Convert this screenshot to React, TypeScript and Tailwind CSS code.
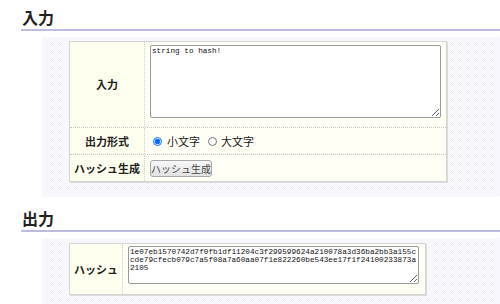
const HASH =
  '1e07eb1570742d7f0fb1df11204c3f299599624a210078a3d36ba2bb3a155ccde79cfecb079c7a5f08a7a60aa07f1e822260be543ee17f1f24100233873a2105';

const jp = "font-['Noto_Sans_CJK_JP','Noto_Sans',sans-serif]";
const mono = "font-['Liberation_Mono',monospace]";
const pattern =
  'bg-[image:repeating-conic-gradient(#f2f2fa_0_25%,#fdfdff_0_50%)] bg-[length:2px_2px]';

function Heading({ title }: { title: string }) {
  return (
    <h2
      className={`ml-[21px] pl-[1px] pt-[5px] text-[16px] leading-[24px] font-bold text-[#222] border-b-2 border-[#bcbcdf] ${jp}`}
    >
      {title}
    </h2>
  );
}

function Label({ children, className = '' }: { children: React.ReactNode; className?: string }) {
  return (
    <div
      className={`flex items-center justify-center bg-[#fffff0] border-r border-dotted border-[#cfcfcf] text-[11px] font-bold text-[#222] ${className}`}
    >
      {children}
    </div>
  );
}

export default function App() {
  return (
    <div className={`w-[500px] h-[304px] overflow-hidden bg-white ${jp}`}>
      <Heading title="入力" />
      <div className={`ml-[42px] mt-[6px] pt-[4px] pb-[15px] pl-[27px] ${pattern}`}>
        <div className="w-[378px] border border-[#d4d4d4] shadow-[1px_1px_0_#dcdcdc] bg-[#fffff6]">
          <div className="grid grid-cols-[75px_1fr] h-[86px] border-b border-dotted border-[#c8c8c8]">
            <Label>入力</Label>
            <div className="pl-[5px] pt-[3px]">
              <textarea
                defaultValue="string to hash!"
                className={`block w-[291px] h-[73px] px-[1px] py-[1px] text-[7.7px] leading-[8px] text-[#111] bg-white border border-[#9a9a9a] rounded-[2px] outline-none ${mono}`}
              />
            </div>
          </div>
          <div className="grid grid-cols-[75px_1fr] h-[27px] border-b border-dotted border-[#c8c8c8]">
            <Label>出力形式</Label>
            <div className="flex items-center pl-[8px] text-[11px] text-[#222]">
              <label className="flex items-center">
                <input type="radio" name="case" defaultChecked className="w-[9px] h-[9px] m-0 accent-[#0a6cff]" />
                <span className="ml-[5px]">小文字</span>
              </label>
              <label className="flex items-center ml-[8px]">
                <input type="radio" name="case" className="w-[9px] h-[9px] m-0" />
                <span className="ml-[4px]">大文字</span>
              </label>
            </div>
          </div>
          <div className="grid grid-cols-[75px_1fr] h-[26px]">
            <Label>ハッシュ生成</Label>
            <div className="flex items-center pl-[5px]">
              <button className="h-[17px] w-[62px] text-[10px] leading-[15px] text-[#444] bg-gradient-to-b from-[#f8f8f8] to-[#e2e2e2] border border-[#a8a8a8] rounded-[3px]">
                ハッシュ生成
              </button>
            </div>
          </div>
        </div>
      </div>

      <div className="mt-[4px]">
        <Heading title="出力" />
      </div>
      <div className={`ml-[42px] mt-[6px] pt-[5px] pb-[20px] pl-[27px] ${pattern}`}>
        <div className="w-[357px] border border-[#d4d4d4] shadow-[1px_1px_0_#dcdcdc] bg-[#fffff6]">
          <div className="grid grid-cols-[53px_1fr] h-[50px]">
            <Label>ハッシュ</Label>
            <div className="pl-[5px] pt-[2px]">
              <textarea
                readOnly
                value={HASH}
                className={`block w-[291px] h-[38px] px-[1px] py-[1px] text-[7.7px] leading-[8px] text-[#111] bg-white border border-[#9a9a9a] rounded-[2px] outline-none break-all ${mono}`}
              />
            </div>
          </div>
        </div>
      </div>
    </div>
  );
}
